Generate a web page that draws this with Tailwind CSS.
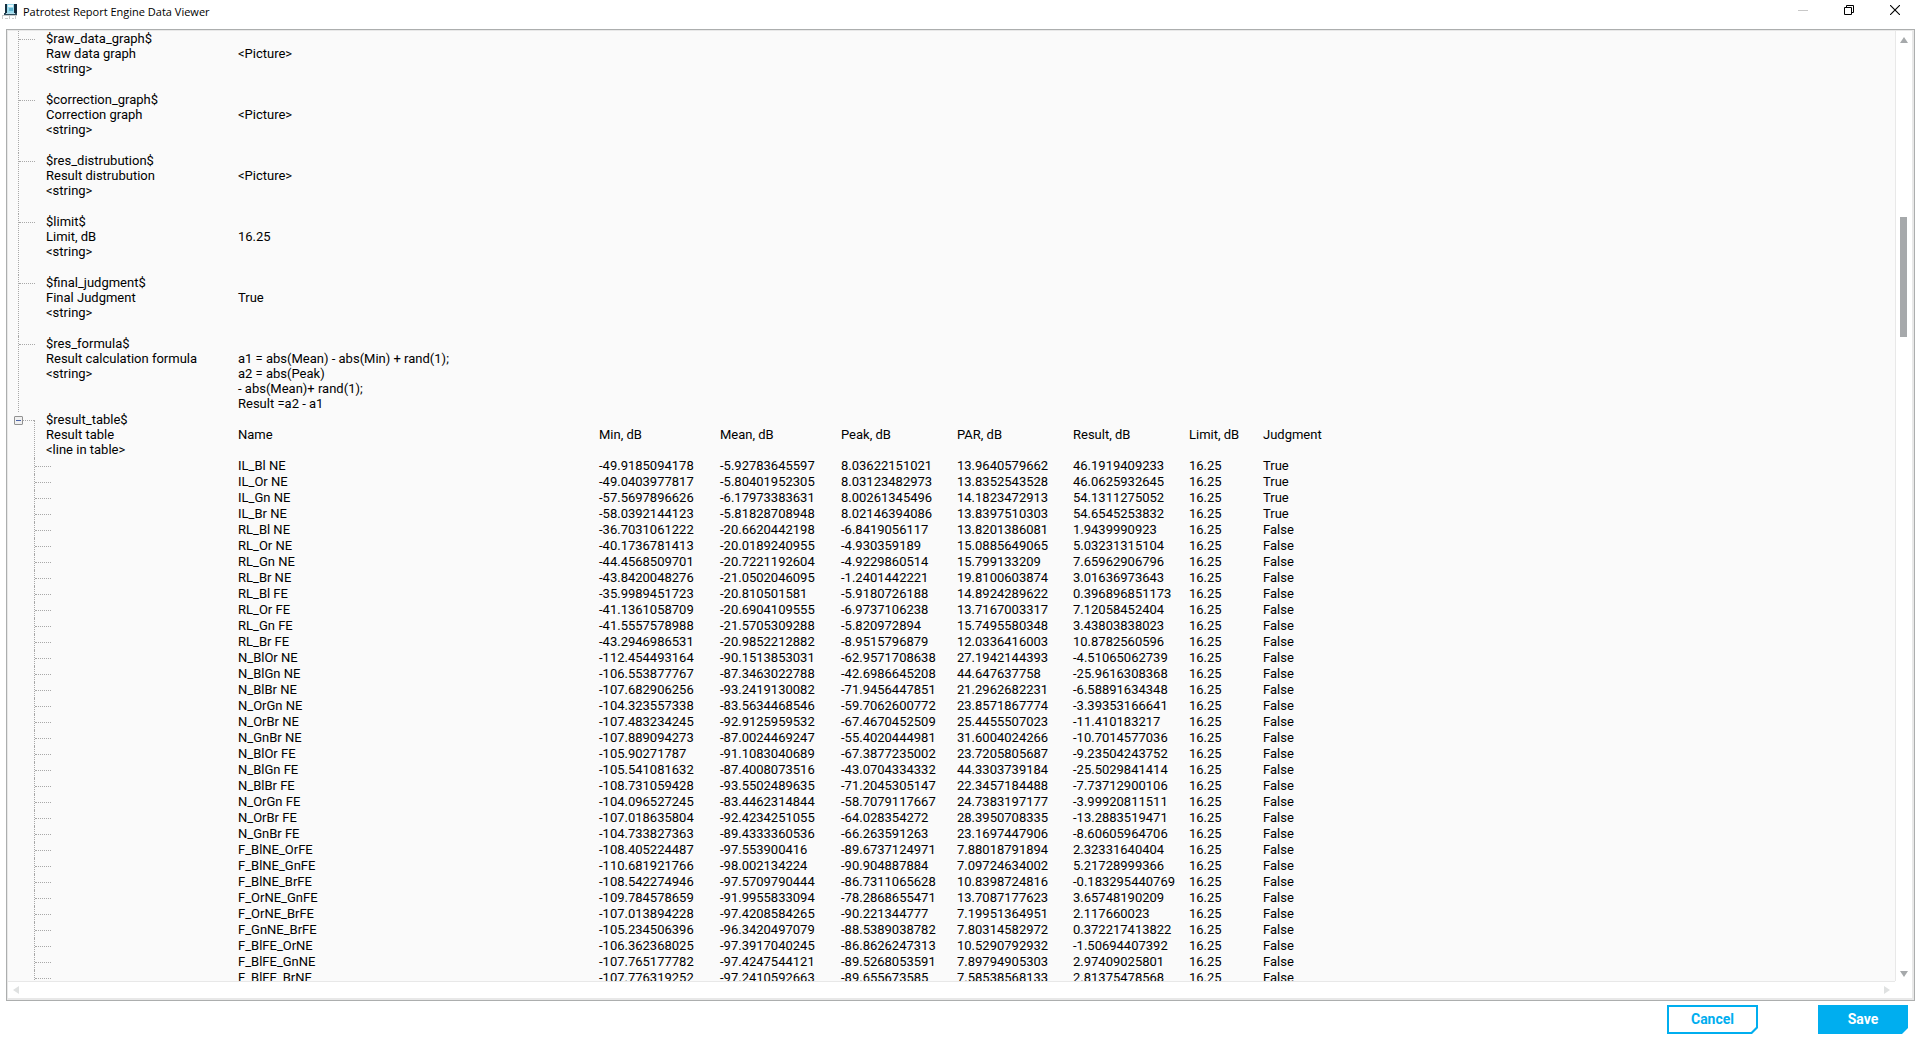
<!DOCTYPE html>
<html lang="en">
  <head>
    <meta charset="UTF-8" />
    <meta name="viewport" content="width=device-width, initial-scale=1.0" />
    <title>Patrotest Report Engine Data Viewer</title>
    <script src="https://cdn.jsdelivr.net/npm/@tailwindcss/browser@4"></script>
  </head>
  <body
    class="h-screen flex flex-col overflow-hidden bg-white text-black font-['Roboto',sans-serif] text-[13px] leading-[15px]"
  >
    <!-- Title bar -->
    <header class="h-[29px] flex items-start justify-between pl-[2px] pr-[2px]">
      <div class="flex items-center h-6 gap-1">
        <svg class="w-4 h-4" viewBox="0 0 16 16" aria-hidden="true">
          <path d="M3 0h11v10H3z" fill="#2b6078" />
          <path d="M12 0h3v10h-3z" fill="#12293a" />
          <path d="M3 0h2v9H3z" fill="#16303f" />
          <path d="M5 0h7v9H5z" fill="#9ad9ec" />
          <path d="M6 1h5v2H6z" fill="#e9f8fc" />
          <path d="M7 4h4v3H7z" fill="#5fb3cf" />
          <path d="M2 9h13v2H2z" fill="#2d4a5a" />
          <path d="M4 9h9v1H4z" fill="#b7dfeb" />
          <path d="M0 11h15v1H0zM0 12h1v3H0zM3 14h3v1H3zM7 12h1v3H7zM10 14h2v1h-2zM13 12h1v3h-1z" fill="#c9c9c9" />
        </svg>
        <h1 class="pl-px font-['Open_Sans',sans-serif] text-[11px] leading-4">
          Patrotest Report Engine Data Viewer
        </h1>
      </div>
      <div class="flex">
        <button type="button" aria-label="Minimize" class="w-[46px] h-5 flex items-center justify-center">
          <svg class="w-[10px] h-[10px]" viewBox="0 0 10 10" shape-rendering="crispEdges">
            <path d="M0 5h10v1H0z" fill="#c8c8c8" />
          </svg>
        </button>
        <button type="button" aria-label="Restore" class="w-[46px] h-5 flex items-center justify-center">
          <svg class="w-[10px] h-[10px]" viewBox="0 0 10 10" fill="none" stroke="#000">
            <path d="M.5 2.5h7v7h-7zM2.5 2.5v-2h7v7h-2" />
          </svg>
        </button>
        <button type="button" aria-label="Close" class="w-[46px] h-5 flex items-center justify-center">
          <svg class="w-[10px] h-[10px]" viewBox="0 0 10 10" fill="none" stroke="#000" stroke-width="1.1">
            <path d="M0 0l10 10M10 0L0 10" />
          </svg>
        </button>
      </div>
    </header>

    <main class="flex-1 min-h-0 ml-[6px] mr-[5px] border border-[#acaeae] flex">
      <div
        class="flex-1 min-w-0 grid grid-cols-[1fr_17px] grid-rows-[1fr_17px] border-t border-l border-r-2 border-b-2 border-[#e8e8e8]"
      >
        <!-- Tree -->
        <div class="min-h-0 min-w-0 overflow-hidden bg-[#fafafa]">
          <ul id="fields"></ul>
          <div class="flex">
            <div class="w-[26px] pt-1 pl-[6px] flex items-start shrink-0">
              <button
                type="button"
                aria-label="Collapse"
                class="w-[9px] h-[9px] shrink-0 flex items-center justify-center border border-[#919191] rounded-[1px] bg-[#f0f0f0]"
              >
                <span class="w-[5px] h-px bg-[#4b63a7]"></span>
              </button>
              <div class="flex-1 h-[5px] border-b border-dotted border-[#a8a8a8]"></div>
            </div>
            <table class="table-fixed w-[1300px] border-separate border-spacing-0 text-left">
              <colgroup>
                <col class="w-[204px]" />
                <col class="w-[361px]" />
                <col class="w-[121px]" />
                <col class="w-[121px]" />
                <col class="w-[116px]" />
                <col class="w-[116px]" />
                <col class="w-[116px]" />
                <col class="w-[74px]" />
                <col />
              </colgroup>
              <thead>
                <tr class="h-[46px] align-top">
                  <th class="p-0 font-normal">
                    <div class="flex h-[46px]">
                      <div class="w-3 mt-2 border-l border-dotted border-[#a8a8a8]"></div>
                      <div>$result_table$<br />Result table<br />&lt;line in table&gt;</div>
                    </div>
                  </th>
                  <th class="p-0 pt-[15px] font-normal">Name</th>
                  <th class="p-0 pt-[15px] font-normal">Min, dB</th>
                  <th class="p-0 pt-[15px] font-normal">Mean, dB</th>
                  <th class="p-0 pt-[15px] font-normal">Peak, dB</th>
                  <th class="p-0 pt-[15px] font-normal">PAR, dB</th>
                  <th class="p-0 pt-[15px] font-normal">Result, dB</th>
                  <th class="p-0 pt-[15px] font-normal">Limit, dB</th>
                  <th class="p-0 pt-[15px] font-normal">Judgment</th>
                </tr>
              </thead>
              <tbody id="resultRows">
                <!-- Result rows will be populated here -->
              </tbody>
            </table>
          </div>
        </div>

        <!-- Vertical scroll bar -->
        <div class="bg-white border-l border-[#e8e8e8] flex flex-col items-center justify-between min-h-0 pr-px">
          <button type="button" aria-label="Scroll up" class="pt-[6px]">
            <svg class="w-2 h-[6px]" viewBox="0 0 8 6"><path d="M4 0l4 6H0z" fill="#a6a9ab" /></svg>
          </button>
          <div class="flex-1 w-[7px] pt-[174px]">
            <div class="h-[120px] bg-[#a6a9ab]"></div>
          </div>
          <button type="button" aria-label="Scroll down" class="pb-1">
            <svg class="w-2 h-[6px]" viewBox="0 0 8 6"><path d="M0 0h8L4 6z" fill="#a6a9ab" /></svg>
          </button>
        </div>

        <!-- Horizontal scroll bar -->
        <div class="bg-white border-t border-[#e8e8e8] flex items-center justify-between px-[5px]">
          <button type="button" aria-label="Scroll left">
            <svg class="w-[6px] h-2" viewBox="0 0 6 8"><path d="M6 0v8L0 4z" fill="#dfe1e1" /></svg>
          </button>
          <button type="button" aria-label="Scroll right">
            <svg class="w-[6px] h-2" viewBox="0 0 6 8"><path d="M0 0v8l6-4z" fill="#dfe1e1" /></svg>
          </button>
        </div>
        <div class="bg-white"></div>
      </div>
    </main>

    <footer class="flex justify-end gap-[60px] pt-1 pr-3 pb-[6px] font-bold text-[14px]">
      <button
        type="button"
        class="w-[91px] h-[29px] p-[2px] bg-[#00aeef] text-[#00aeef] [clip-path:polygon(0_0,100%_0,100%_calc(100%-6px),calc(100%-6px)_100%,0_100%)]"
      >
        <span
          class="flex w-full h-full items-center justify-center bg-white [clip-path:polygon(0_0,100%_0,100%_calc(100%-5px),calc(100%-5px)_100%,0_100%)]"
          >Cancel</span
        >
      </button>
      <button
        type="button"
        class="w-[90px] h-[29px] bg-[#00aeef] text-white [clip-path:polygon(0_0,100%_0,100%_calc(100%-6px),calc(100%-6px)_100%,0_100%)]"
      >
        Save
      </button>
    </footer>

    <script>
      const fields = [
        ["$raw_data_graph$", "Raw data graph", ["<Picture>"]],
        ["$correction_graph$", "Correction graph", ["<Picture>"]],
        ["$res_distrubution$", "Result distrubution", ["<Picture>"]],
        ["$limit$", "Limit, dB", ["16.25"]],
        ["$final_judgment$", "Final Judgment", ["True"]],
        [
          "$res_formula$",
          "Result calculation formula",
          [
            "a1 = abs(Mean) - abs(Min) + rand(1);",
            "a2 = abs(Peak)",
            "- abs(Mean)+ rand(1);",
            "Result =a2 - a1",
          ],
        ],
      ];

      // name, min, mean, peak, PAR, result
      const results = `
IL_Bl NE|-49.9185094178|-5.92783645597|8.03622151021|13.9640579662|46.1919409233
IL_Or NE|-49.0403977817|-5.80401952305|8.03123482973|13.8352543528|46.0625932645
IL_Gn NE|-57.5697896626|-6.17973383631|8.00261345496|14.1823472913|54.1311275052
IL_Br NE|-58.0392144123|-5.81828708948|8.02146394086|13.8397510303|54.6545253832
RL_Bl NE|-36.7031061222|-20.6620442198|-6.8419056117|13.8201386081|1.9439990923
RL_Or NE|-40.1736781413|-20.0189240955|-4.930359189|15.0885649065|5.03231315104
RL_Gn NE|-44.4568509701|-20.7221192604|-4.9229860514|15.799133209|7.65962906796
RL_Br NE|-43.8420048276|-21.0502046095|-1.2401442221|19.8100603874|3.01636973643
RL_Bl FE|-35.9989451723|-20.810501581|-5.9180726188|14.8924289622|0.396896851173
RL_Or FE|-41.1361058709|-20.6904109555|-6.9737106238|13.7167003317|7.12058452404
RL_Gn FE|-41.5557578988|-21.5705309288|-5.820972894|15.7495580348|3.43803838023
RL_Br FE|-43.2946986531|-20.9852212882|-8.9515796879|12.0336416003|10.8782560596
N_BlOr NE|-112.454493164|-90.1513853031|-62.9571708638|27.1942144393|-4.51065062739
N_BlGn NE|-106.553877767|-87.3463022788|-42.6986645208|44.647637758|-25.9616308368
N_BlBr NE|-107.682906256|-93.2419130082|-71.9456447851|21.2962682231|-6.58891634348
N_OrGn NE|-104.323557338|-83.5634468546|-59.7062600772|23.8571867774|-3.39353166641
N_OrBr NE|-107.483234245|-92.9125959532|-67.4670452509|25.4455507023|-11.410183217
N_GnBr NE|-107.889094273|-87.0024469247|-55.4020444981|31.6004024266|-10.7014577036
N_BlOr FE|-105.90271787|-91.1083040689|-67.3877235002|23.7205805687|-9.23504243752
N_BlGn FE|-105.541081632|-87.4008073516|-43.0704334332|44.3303739184|-25.5029841414
N_BlBr FE|-108.731059428|-93.5502489635|-71.2045305147|22.3457184488|-7.73712900106
N_OrGn FE|-104.096527245|-83.4462314844|-58.7079117667|24.7383197177|-3.99920811511
N_OrBr FE|-107.018635804|-92.4234251055|-64.028354272|28.3950708335|-13.2883519471
N_GnBr FE|-104.733827363|-89.4333360536|-66.263591263|23.1697447906|-8.60605964706
F_BlNE_OrFE|-108.405224487|-97.553900416|-89.6737124971|7.88018791894|2.32331640404
F_BlNE_GnFE|-110.681921766|-98.002134224|-90.904887884|7.09724634002|5.21728999366
F_BlNE_BrFE|-108.542274946|-97.5709790444|-86.7311065628|10.8398724816|-0.183295440769
F_OrNE_GnFE|-109.784578659|-91.9955833094|-78.2868655471|13.7087177623|3.65748190209
F_OrNE_BrFE|-107.013894228|-97.4208584265|-90.221344777|7.19951364951|2.117660023
F_GnNE_BrFE|-105.234506396|-96.3420497079|-88.5389038782|7.80314582972|0.372217413822
F_BlFE_OrNE|-106.362368025|-97.3917040245|-86.8626247313|10.5290792932|-1.50694407392
F_BlFE_GnNE|-107.765177782|-97.4247544121|-89.5268053591|7.89794905303|2.97409025801
F_BlFE_BrNE|-107.776319252|-97.2410592663|-89.655673585|7.58538568133|2.81375478568`
        .trim()
        .split("\n");

      const escapeHtml = (s) => s.replace(/</g, "&lt;").replace(/>/g, "&gt;");

      document.getElementById("fields").innerHTML = fields
        .map(
          ([key, label, value]) => `
            <li class="flex min-h-[61px] pb-px pl-[10px]">
              <div class="w-7 -mb-px border-l border-dotted border-[#a8a8a8] shrink-0">
                <div class="w-4 h-[9px] border-b border-dotted border-[#a8a8a8]"></div>
              </div>
              <div class="w-48 shrink-0">${key}<br />${label}<br />&lt;string&gt;</div>
              <div class="pt-[15px]">${value.map(escapeHtml).join("<br />")}</div>
            </li>`
        )
        .join("");

      // Results above the limit pass
      document.getElementById("resultRows").innerHTML = results
        .map((line) => {
          const cells = line.split("|");
          const passed = Number(cells[5]) > 16.25;
          return `
            <tr class="h-4 align-top">
              <td class="p-0 border-l border-dotted border-[#a8a8a8]">
                <div class="w-4 h-[9px] border-b border-dotted border-[#a8a8a8]"></div>
              </td>
              ${cells.map((c) => `<td class="p-0">${c}</td>`).join("")}
              <td class="p-0">16.25</td>
              <td class="p-0">${passed ? "True" : "False"}</td>
            </tr>`;
        })
        .join("");
    </script>
  </body>
</html>
